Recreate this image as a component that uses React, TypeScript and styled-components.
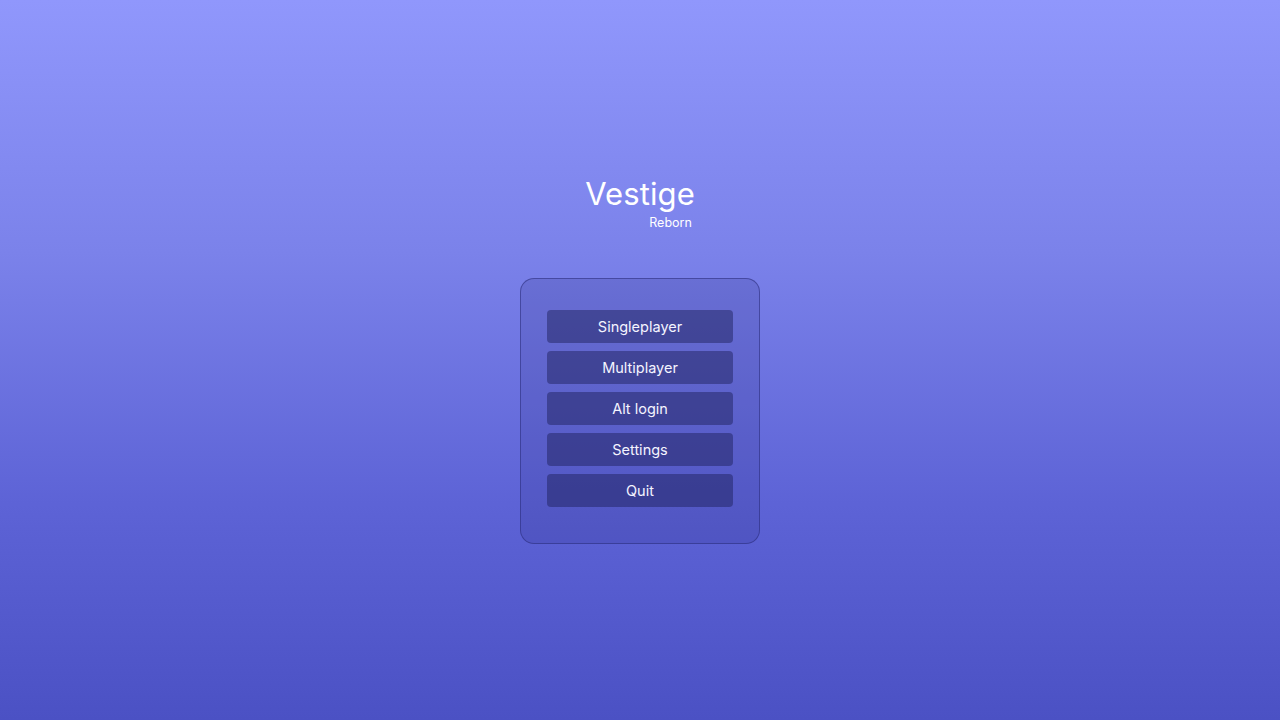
import React from "react"
import styled, { createGlobalStyle } from "styled-components"

const GlobalStyle = createGlobalStyle`
    html, body, #root {
        margin: 0;
        padding: 0;
        height: 100%;
    }
    body {
        font-family: "Inter", "Lato", sans-serif;
        color: #fff;
    }
`

const Screen = styled.div`
    height: 100vh;
    display: flex;
    flex-direction: column;
    align-items: center;
    background: linear-gradient(180deg, #9097fc 0%, #7b82ea 35%, #5d63d6 70%, #4b51c4 100%);
`

const TitleBlock = styled.div`
    margin-top: 173px;
    display: flex;
    flex-direction: column;
    align-items: flex-end;
`

const Title = styled.h1`
    margin: 0;
    font-size: 31px;
    font-weight: 400;
    line-height: 42px;
    letter-spacing: 0.1px;
`

const Subtitle = styled.span`
    font-size: 12.5px;
    line-height: 16px;
    margin-right: 3px;
    margin-top: 0;
`

const Panel = styled.div`
    margin-top: 47px;
    width: 240px;
    box-sizing: border-box;
    padding: 31px 26px 36px;
    display: flex;
    flex-direction: column;
    gap: 8px;
    border-radius: 14px;
    border: 1px solid rgba(40, 42, 120, 0.55);
    background: rgba(40, 40, 120, 0.18);
`

const MenuButton = styled.button`
    height: 33px;
    border: none;
    border-radius: 4px;
    background: rgba(30, 32, 90, 0.48);
    color: #f4f4ff;
    font-family: "Inter", "Lato", sans-serif;
    font-size: 14.5px;
    cursor: pointer;
    &:hover {
        background: rgba(30, 32, 90, 0.65);
    }
`

const items = ["Singleplayer", "Multiplayer", "Alt login", "Settings", "Quit"]

export default function App(): JSX.Element {
    return (
        <>
            <GlobalStyle />
            <Screen>
                <TitleBlock>
                    <Title>Vestige</Title>
                    <Subtitle>Reborn</Subtitle>
                </TitleBlock>
                <Panel>
                    {items.map((label) => (
                        <MenuButton key={label}>{label}</MenuButton>
                    ))}
                </Panel>
            </Screen>
        </>
    )
}
